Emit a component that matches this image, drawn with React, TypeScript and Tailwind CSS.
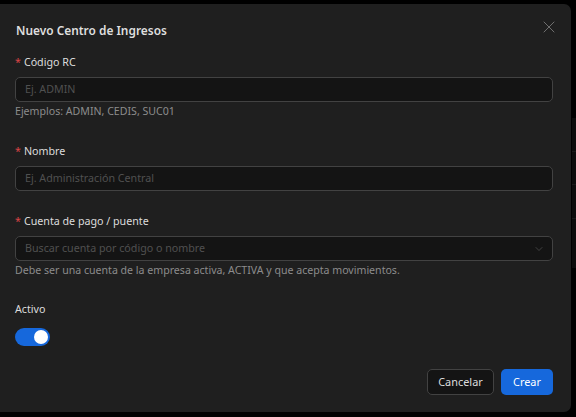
import { ChevronDown, X } from 'lucide-react';

const font = { fontFamily: '"Noto Sans", "Open Sans", sans-serif' };

const Label = ({ text, required, className = '' }: { text: string; required?: boolean; className?: string }) => (
  <div className={`text-[10.7px] leading-[18px] text-[#dcdcdc] ${className}`}>
    {required && <span className="text-[#dc4446] mr-[3px]">*</span>}
    {text}
  </div>
);

const Help = ({ text }: { text: string }) => (
  <div className="text-[10.6px] leading-[18px] text-[#8c8c8c]">{text}</div>
);

const Field = ({ placeholder }: { placeholder: string }) => (
  <div className="h-[25px] rounded-[5px] border border-[#424242] bg-[#141414] px-[9px] flex items-center">
    <span className="text-[10.7px] text-[#505050]">{placeholder}</span>
  </div>
);

export default function App() {
  return (
    <div className="w-[576px] h-[417px] bg-black overflow-hidden flex" style={font}>
      <div className="w-[571px] shrink-0 mt-[4px] h-[408px] bg-[#1f1f1f] rounded-r-[7px] pl-[15px] pr-[18px] pt-[17px] flex flex-col">
        <div className="flex items-start justify-between">
          <h2 className="text-[11.9px] leading-[19px] font-semibold text-[#dedede] pl-[1px]">
            Nuevo Centro de Ingresos
          </h2>
          <X size={20} strokeWidth={1} className="text-[#808080] mt-[-4px] mr-[-6px]" />
        </div>

        <Label text="Código RC" required className="mt-[13px] mb-[6px]" />
        <Field placeholder="Ej. ADMIN" />
        <Help text="Ejemplos: ADMIN, CEDIS, SUC01" />

        <Label text="Nombre" required className="mt-[22px] mb-[6px]" />
        <Field placeholder="Ej. Administración Central" />

        <Label text="Cuenta de pago / puente" required className="mt-[21px] mb-[6px]" />
        <div className="h-[25px] rounded-[5px] border border-[#424242] bg-[#141414] pl-[9px] pr-[7px] flex items-center justify-between">
          <span className="text-[10.7px] text-[#505050]">Buscar cuenta por código o nombre</span>
          <ChevronDown size={12} strokeWidth={1.4} className="text-[#555555]" />
        </div>
        <Help text="Debe ser una cuenta de la empresa activa, ACTIVA y que acepta movimientos." />

        <Label text="Activo" className="mt-[21px] mb-[10px]" />
        <div className="w-[35px] h-[18px] rounded-full bg-[#1668dc] flex items-center justify-end pr-[2px]">
          <div className="w-[14px] h-[14px] rounded-full bg-white" />
        </div>

        <div className="mt-[23px] flex justify-end gap-[7px]">
          <button className="h-[26px] w-[67px] rounded-[5px] border border-[#424242] bg-[#141414] text-[10.9px] text-[#dcdcdc]">
            Cancelar
          </button>
          <button className="h-[26px] w-[52px] rounded-[5px] bg-[#1668dc] text-[10.9px] text-white">
            Crear
          </button>
        </div>
      </div>

      {/* page behind the overlay */}
      <div className="flex-1 pl-[1px] pt-[118px]">
        <div className="bg-[#0c0c0c] h-[150px] flex flex-col">
          <div className="h-[34px] border-b border-[#1a1a1a]" />
          <div className="h-[33px] border-b border-[#1a1a1a]" />
          <div className="h-[34px] border-b border-[#1a1a1a]" />
        </div>
      </div>
    </div>
  );
}
